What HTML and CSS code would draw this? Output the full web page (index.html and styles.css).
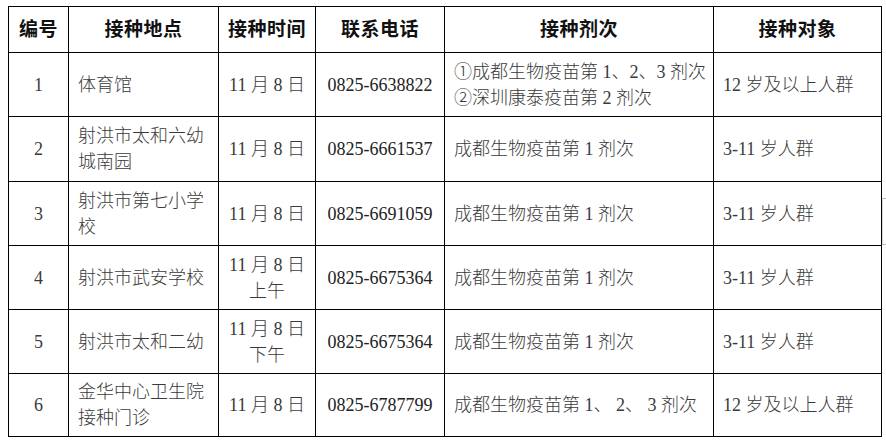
FILE: index.html
```html
<!DOCTYPE html>
<html lang="zh-CN">
<head>
<meta charset="utf-8">
<title>接种安排</title>
<link rel="stylesheet" href="styles.css">
</head>
<body>
<div class="page">
<table class="sched">
  <colgroup>
    <col class="c-no"><col class="c-place"><col class="c-time"><col class="c-tel"><col class="c-dose"><col class="c-target">
  </colgroup>
  <thead>
    <tr class="head">
      <th>编号</th><th>接种地点</th><th>接种时间</th><th>联系电话</th><th>接种剂次</th><th>接种对象</th>
    </tr>
  </thead>
  <tbody>
    <tr class="r1">
      <td class="ctr">1</td><td class="lft">体育馆</td><td class="ctr">11 月 8 日</td><td class="ctr tel">0825-6638822</td>
      <td class="lft">①成都生物疫苗第 1、2、3 剂次<br>②深圳康泰疫苗第 2 剂次</td><td class="lft">12 岁及以上人群</td>
    </tr>
    <tr class="r2">
      <td class="ctr">2</td><td class="lft">射洪市太和六幼<br>城南园</td><td class="ctr">11 月 8 日</td><td class="ctr tel">0825-6661537</td>
      <td class="lft">成都生物疫苗第 1 剂次</td><td class="lft">3-11 岁人群</td>
    </tr>
    <tr class="r3">
      <td class="ctr">3</td><td class="lft">射洪市第七小学<br>校</td><td class="ctr">11 月 8 日</td><td class="ctr tel">0825-6691059</td>
      <td class="lft">成都生物疫苗第 1 剂次</td><td class="lft">3-11 岁人群</td>
    </tr>
    <tr class="r4">
      <td class="ctr">4</td><td class="lft">射洪市武安学校</td><td class="ctr">11 月 8 日<br>上午</td><td class="ctr tel">0825-6675364</td>
      <td class="lft">成都生物疫苗第 1 剂次</td><td class="lft">3-11 岁人群</td>
    </tr>
    <tr class="r5">
      <td class="ctr">5</td><td class="lft">射洪市太和二幼</td><td class="ctr">11 月 8 日<br>下午</td><td class="ctr tel">0825-6675364</td>
      <td class="lft">成都生物疫苗第 1 剂次</td><td class="lft">3-11 岁人群</td>
    </tr>
    <tr class="r6">
      <td class="ctr">6</td><td class="lft">金华中心卫生院<br>接种门诊</td><td class="ctr">11 月 8 日</td><td class="ctr tel">0825-6787799</td>
      <td class="lft">成都生物疫苗第 1、 2、 3 剂次</td><td class="lft">12 岁及以上人群</td>
    </tr>
  </tbody>
</table>
<div class="edge-mark"></div>
</div>
</body>
</html>
```

FILE: styles.css
```css
html, body {
  margin: 0;
  padding: 0;
  background: #ffffff;
}

.page {
  position: relative;
  width: 886px;
  height: 442px;
  padding: 6px 0 0 8px;
  box-sizing: border-box;
}

.sched {
  border-collapse: collapse;
  table-layout: fixed;
  width: 873px;
  font-family: "Liberation Serif", "Noto Sans CJK SC", serif;
  font-size: 18px;
  color: #3a3a3a;
}

.c-no { width: 60px; }
.c-place { width: 150px; }
.c-time { width: 97px; }
.c-tel { width: 129px; }
.c-dose { width: 269px; }
.c-target { width: 168px; }

.sched th,
.sched td {
  border: 1px solid #000;
  padding: 0;
  line-height: 26px;
  white-space: nowrap;
  overflow: hidden;
}

.sched th {
  font-weight: 700;
  font-size: 19px;
  color: #111;
  text-align: center;
  letter-spacing: 0.5px;
}

.sched td {
  font-weight: 300;
}

.head { height: 46px; }
.r1 { height: 64px; }
.r2 { height: 65px; }
.r3 { height: 64px; }
.r4 { height: 64px; }
.r5 { height: 64px; }
.r6 { height: 63px; }

.ctr {
  text-align: center;
}

.lft {
  text-align: left;
  padding-left: 9px !important;
}

.tel {
  color: #222;
  font-weight: 400 !important;
}

.edge-mark {
  position: absolute;
  left: 882px;
  top: 198px;
  width: 6px;
  height: 45px;
  border-top: 1px solid #bbb;
  border-left: 1px solid #ddd;
  border-bottom: 1px solid #bbb;
}
```
